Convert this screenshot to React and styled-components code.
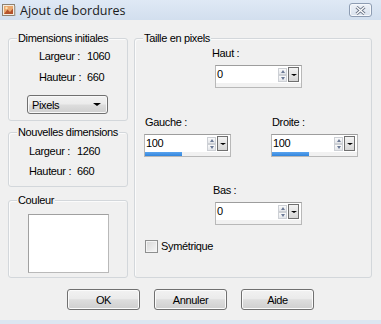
import React from "react";
import styled, { createGlobalStyle } from "styled-components";

const GlobalStyle = createGlobalStyle`
  html, body {
    margin: 0;
    padding: 0;
    background: #f0f0f0;
  }
  body {
    font-family: "Liberation Sans", Arial, sans-serif;
  }
`;

const Window = styled.div`
  width: 381px;
  height: 324px;
  display: flex;
  flex-direction: column;
  background: #f0f0f0;
  color: #000;
  font-size: 11px;
  letter-spacing: -0.35px;
  overflow: hidden;
`;

const TitleBar = styled.div`
  height: 20px;
  flex: none;
  box-sizing: border-box;
  display: flex;
  align-items: center;
  padding: 0 9px 0 2px;
  background: linear-gradient(#dfe9f5, #d2dfee);
`;

const TitleText = styled.span`
  margin-left: 4px;
  font-family: "Open Sans", "Noto Sans", sans-serif;
  font-size: 12.5px;
  letter-spacing: 0;
  color: #1b1b1b;
`;

const CloseButton = styled.div`
  margin-left: auto;
  width: 23px;
  height: 14px;
  box-sizing: border-box;
  border: 1px solid #8d9cb2;
  border-radius: 3px;
  background: linear-gradient(#eef2f8, #d9e2ee);
  box-shadow: inset 0 0 0 1px #f6f8fb;
  display: flex;
  align-items: center;
  justify-content: center;
`;

const Content = styled.div`
  display: flex;
  gap: 6px;
  padding: 18px 0 0 8px;
`;

const LeftColumn = styled.div`
  width: 120px;
  display: flex;
  flex-direction: column;
`;

const Group = styled.div`
  box-sizing: border-box;
  width: ${(p) => p.$w || 120}px;
  height: ${(p) => p.$h}px;
  margin-bottom: ${(p) => p.$gap || 0}px;
  border: 1px solid #d3d7db;
  border-radius: 3px;
  box-shadow: inset 1px 1px 0 #fbfbfb;
  display: flex;
  flex-direction: column;
`;

const Legend = styled.div`
  align-self: flex-start;
  margin: -7px 0 0 8px;
  padding: 0 1px;
  line-height: 13px;
  background: #f0f0f0;
`;

const InfoList = styled.div`
  display: flex;
  flex-direction: column;
  gap: ${(p) => p.$gap}px;
  margin-top: ${(p) => p.$top}px;
  padding-left: ${(p) => p.$left}px;
`;

const InfoRow = styled.div`
  display: flex;
  line-height: 13px;
`;

const InfoLabel = styled.span`
  width: 48px;
  flex: none;
`;

const Combo = styled.div`
  margin: 11px 0 0 18px;
  width: 81px;
  height: 19px;
  box-sizing: border-box;
  border: 1px solid #707070;
  border-radius: 3px;
  background: linear-gradient(#f2f2f2 0%, #ebebeb 48%, #dddddd 52%, #cfcfcf 100%);
  box-shadow: inset 0 0 0 1px #f8f8f8;
  display: flex;
  align-items: center;
  justify-content: space-between;
  padding: 0 6px 0 4px;
`;

const DownArrow = styled.span`
  width: 0;
  height: 0;
  border-left: ${(p) => p.$size}px solid transparent;
  border-right: ${(p) => p.$size}px solid transparent;
  border-top: ${(p) => p.$size - 1}px solid #000;
`;

const ColorBox = styled.div`
  margin: 7px 0 0 19px;
  width: 81px;
  height: 59px;
  box-sizing: border-box;
  background: #fff;
  border: 1px solid #b9b9b9;
  border-top-color: #a0a0a0;
  border-left-color: #a0a0a0;
`;

const FieldRow = styled.div`
  display: flex;
  gap: ${(p) => p.$gap || 0}px;
  margin-top: ${(p) => p.$top}px;
  padding-left: ${(p) => p.$left}px;
`;

const Field = styled.div`
  display: flex;
  flex-direction: column;
  gap: 5px;
`;

const FieldLabel = styled.span`
  line-height: 13px;
  margin-left: ${(p) => p.$shift || 0}px;
`;

const SpinBox = styled.div`
  width: 87px;
  height: 23px;
  box-sizing: border-box;
  border: 1px solid #b8b8b8;
  border-top-color: #9d9d9d;
  display: flex;
  flex-direction: column;
  background: #fff;
`;

const SpinTop = styled.div`
  height: 17px;
  display: flex;
  align-items: center;
`;

const SpinValue = styled.span`
  flex: 1;
  padding-left: 1px;
  line-height: 13px;
`;

const Stepper = styled.div`
  width: 9px;
  height: 14px;
  display: flex;
  flex-direction: column;
  margin-right: 1px;
`;

const StepButton = styled.div`
  flex: 1;
  box-sizing: border-box;
  border: 1px solid #cdd0d5;
  background: linear-gradient(#fbfbfb, #e4e6ea);
  display: flex;
  align-items: center;
  justify-content: center;
`;

const StepArrow = styled.span`
  width: 0;
  height: 0;
  border-left: 2.5px solid transparent;
  border-right: 2.5px solid transparent;
  ${(p) => (p.$up ? "border-bottom" : "border-top")}: 3px solid #6c7a96;
`;

const DropButton = styled.div`
  width: 11px;
  height: 15px;
  margin-right: 2px;
  box-sizing: border-box;
  border: 1px solid #6f6f6f;
  background: linear-gradient(#f3f3f3, #d6d6d6);
  display: flex;
  align-items: center;
  justify-content: center;
`;

const Progress = styled.div`
  height: 4px;
  background: #f1f1f1;
`;

const ProgressBar = styled.div`
  height: 100%;
  background: linear-gradient(#5aa3ee, #3185dd);
`;

const CheckRow = styled.label`
  display: flex;
  align-items: center;
  gap: 3px;
  margin-top: 15px;
  padding-left: 10px;
  line-height: 13px;
`;

const CheckBox = styled.span`
  width: 13px;
  height: 13px;
  box-sizing: border-box;
  border: 1px solid #8e8f8f;
  background: linear-gradient(135deg, #d6d6d6, #f7f7f7);
  box-shadow: inset 0 0 0 1px #f4f4f4;
`;

const ButtonRow = styled.div`
  display: flex;
  justify-content: center;
  gap: 14px;
  margin-top: 11px;
`;

const Button = styled.button`
  width: 73px;
  height: 21px;
  box-sizing: border-box;
  padding: 0;
  border: 1px solid #707070;
  border-radius: 3px;
  background: linear-gradient(#f2f2f2 0%, #ebebeb 45%, #dddddd 52%, #cfcfcf 100%);
  box-shadow: inset 0 0 0 1px #fbfbfb;
  font: inherit;
  letter-spacing: inherit;
  color: #000;
`;

const FrameBottom = styled.div`
  margin-top: auto;
  height: 4px;
  background: #dce6f1;
`;

const Spin = ({ value, bar = 0 }) => (
  <SpinBox>
    <SpinTop>
      <SpinValue>{value}</SpinValue>
      <Stepper>
        <StepButton>
          <StepArrow $up />
        </StepButton>
        <StepButton>
          <StepArrow />
        </StepButton>
      </Stepper>
      <DropButton>
        <DownArrow $size={3} />
      </DropButton>
    </SpinTop>
    <Progress>
      <ProgressBar style={{ width: bar }} />
    </Progress>
  </SpinBox>
);

const AppIcon = () => (
  <svg width="14" height="14" viewBox="0 0 14 14">
    <rect x="0.5" y="1.5" width="12" height="11" fill="#f3ece2" stroke="#8d8272" />
    <rect x="2" y="3" width="9" height="8" fill="#e9a86f" />
    <path d="M2 11 L5.5 6.5 L8 9 L11 5.5 V11 Z" fill="#b4532c" />
    <circle cx="4.5" cy="5" r="1.2" fill="#fbe4b4" />
    <rect x="12.5" y="3" width="1" height="10" fill="#b9b2a6" />
  </svg>
);

const CloseGlyph = () => (
  <svg width="11" height="9" viewBox="0 0 11 9">
    <path d="M1.5 1 L9.5 8 M9.5 1 L1.5 8" stroke="#6a7486" strokeWidth="3" />
    <path d="M1.5 1 L9.5 8 M9.5 1 L1.5 8" stroke="#ffffff" strokeWidth="1.3" />
  </svg>
);

const App = () => {
  return (
    <Window>
      <GlobalStyle />
      <TitleBar>
        <AppIcon />
        <TitleText>Ajout de bordures</TitleText>
        <CloseButton>
          <CloseGlyph />
        </CloseButton>
      </TitleBar>

      <Content>
        <LeftColumn>
          <Group $h={83} $gap={11}>
            <Legend>Dimensions initiales</Legend>
            <InfoList $top={5} $gap={8} $left={30}>
              <InfoRow>
                <InfoLabel>Largeur :</InfoLabel>
                <span>1060</span>
              </InfoRow>
              <InfoRow>
                <InfoLabel>Hauteur :</InfoLabel>
                <span>660</span>
              </InfoRow>
            </InfoList>
            <Combo>
              <span>Pixels</span>
              <DownArrow $size={4} />
            </Combo>
          </Group>

          <Group $h={55} $gap={13}>
            <Legend>Nouvelles dimensions</Legend>
            <InfoList $top={6} $gap={7} $left={20}>
              <InfoRow>
                <InfoLabel>Largeur :</InfoLabel>
                <span>1260</span>
              </InfoRow>
              <InfoRow>
                <InfoLabel>Hauteur :</InfoLabel>
                <span>660</span>
              </InfoRow>
            </InfoList>
          </Group>

          <Group $h={78}>
            <Legend>Couleur</Legend>
            <ColorBox />
          </Group>
        </LeftColumn>

        <Group $w={238} $h={240}>
          <Legend>Taille en pixels</Legend>

          <FieldRow $top={2} $left={80}>
            <Field>
              <FieldLabel $shift={-3}>Haut :</FieldLabel>
              <Spin value="0" />
            </Field>
          </FieldRow>

          <FieldRow $top={28} $left={9} $gap={40}>
            <Field>
              <FieldLabel $shift={1}>Gauche :</FieldLabel>
              <Spin value="100" bar={37} />
            </Field>
            <Field>
              <FieldLabel $shift={1}>Droite :</FieldLabel>
              <Spin value="100" bar={37} />
            </Field>
          </FieldRow>

          <FieldRow $top={27} $left={80}>
            <Field>
              <FieldLabel $shift={-2}>Bas :</FieldLabel>
              <Spin value="0" />
            </Field>
          </FieldRow>

          <CheckRow>
            <CheckBox />
            <span>Symétrique</span>
          </CheckRow>
        </Group>
      </Content>

      <ButtonRow>
        <Button>OK</Button>
        <Button>Annuler</Button>
        <Button>Aide</Button>
      </ButtonRow>

      <FrameBottom />
    </Window>
  );
};

export default App;
